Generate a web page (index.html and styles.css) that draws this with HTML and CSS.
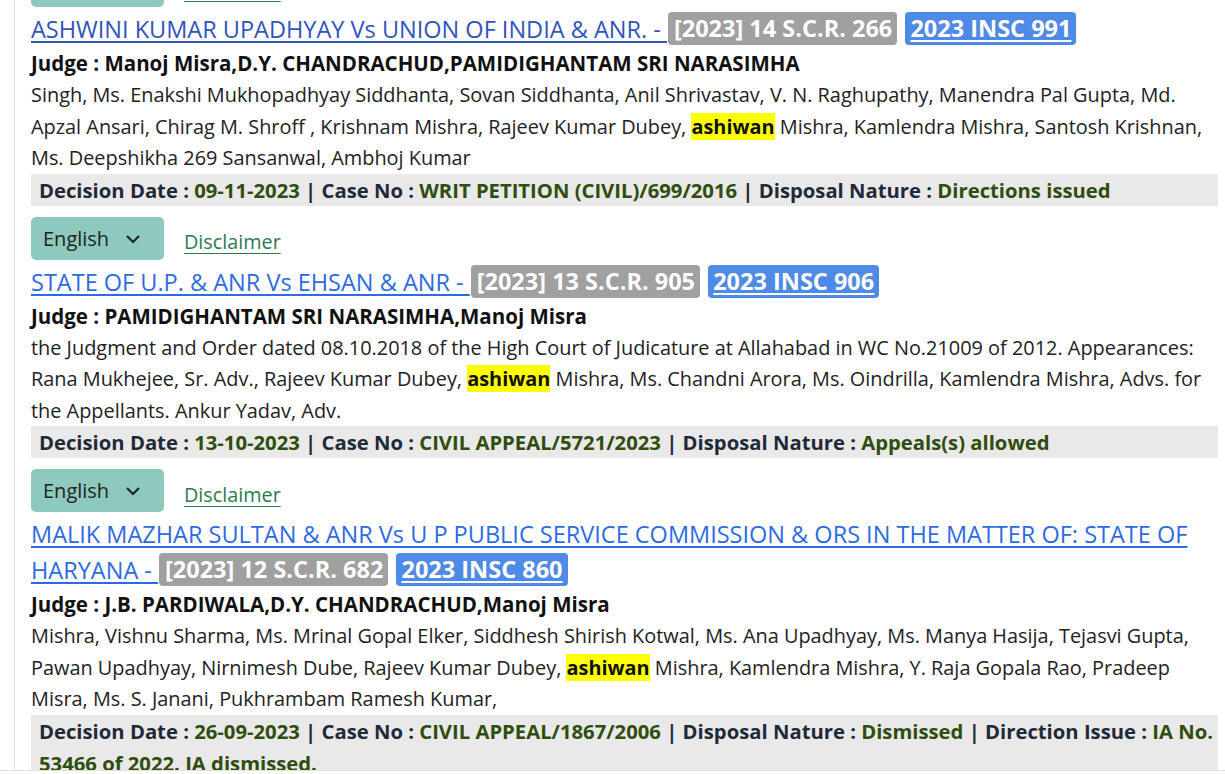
FILE: index.html
```html
<!DOCTYPE html>
<html lang="en">
<head>
<meta charset="utf-8">
<title>Judgments</title>
<link rel="stylesheet" href="styles.css">
</head>
<body>
<div class="page">
  <div class="list">
    <div class="entry">
      <div class="tools">
        <div class="select">English <svg class="chev" width="16" height="10" viewBox="0 0 16 10"><path d="M2 2l6 6 6-6" fill="none" stroke="#222" stroke-width="2.2"/></svg></div>
        <a class="disc" href="#">Disclaimer</a>
      </div>
      <div class="title"><a class="tlink visited" href="#">ASHWINI KUMAR UPADHYAY Vs UNION OF INDIA &amp; ANR. - </a> <span class="badge grey">[2023] 14 S.C.R. 266</span> <a class="badge blue" href="#">2023 INSC 991</a></div>
      <div class="judge">Judge : Manoj Misra,D.Y. CHANDRACHUD,PAMIDIGHANTAM SRI NARASIMHA</div>
      <div class="text">Singh, Ms. Enakshi Mukhopadhyay Siddhanta, Sovan Siddhanta, Anil Shrivastav, V. N. Raghupathy, Manendra Pal Gupta, Md.<br>Apzal Ansari, Chirag M. Shroff , Krishnam Mishra, Rajeev Kumar Dubey, <mark>ashiwan</mark> Mishra, Kamlendra Mishra, Santosh Krishnan,<br>Ms. Deepshikha 269 Sansanwal, Ambhoj Kumar</div>
      <div class="bar">Decision Date : <span class="v">09-11-2023</span> | Case No : <span class="v">WRIT PETITION (CIVIL)/699/2016</span> | Disposal Nature : <span class="v">Directions issued</span></div>
    </div>
    <div class="entry">
      <div class="tools">
        <div class="select">English <svg class="chev" width="16" height="10" viewBox="0 0 16 10"><path d="M2 2l6 6 6-6" fill="none" stroke="#222" stroke-width="2.2"/></svg></div>
        <a class="disc" href="#">Disclaimer</a>
      </div>
      <div class="title"><a class="tlink" href="#">STATE OF U.P. &amp; ANR Vs EHSAN &amp; ANR - </a> <span class="badge grey">[2023] 13 S.C.R. 905</span> <a class="badge blue" href="#">2023 INSC 906</a></div>
      <div class="judge">Judge : PAMIDIGHANTAM SRI NARASIMHA,Manoj Misra</div>
      <div class="text">the Judgment and Order dated 08.10.2018 of the High Court of Judicature at Allahabad in WC No.21009 of 2012. Appearances:<br>Rana Mukhejee, Sr. Adv., Rajeev Kumar Dubey, <mark>ashiwan</mark> Mishra, Ms. Chandni Arora, Ms. Oindrilla, Kamlendra Mishra, Advs. for<br>the Appellants. Ankur Yadav, Adv.</div>
      <div class="bar">Decision Date : <span class="v">13-10-2023</span> | Case No : <span class="v">CIVIL APPEAL/5721/2023</span> | Disposal Nature : <span class="v">Appeals(s) allowed</span></div>
    </div>
    <div class="entry">
      <div class="tools">
        <div class="select">English <svg class="chev" width="16" height="10" viewBox="0 0 16 10"><path d="M2 2l6 6 6-6" fill="none" stroke="#222" stroke-width="2.2"/></svg></div>
        <a class="disc" href="#">Disclaimer</a>
      </div>
      <div class="title"><a class="tlink" href="#">MALIK MAZHAR SULTAN &amp; ANR Vs U P PUBLIC SERVICE COMMISSION &amp; ORS IN THE MATTER OF: STATE OF<br>HARYANA - </a> <span class="badge grey">[2023] 12 S.C.R. 682</span> <a class="badge blue" href="#">2023 INSC 860</a></div>
      <div class="judge">Judge : J.B. PARDIWALA,D.Y. CHANDRACHUD,Manoj Misra</div>
      <div class="text">Mishra, Vishnu Sharma, Ms. Mrinal Gopal Elker, Siddhesh Shirish Kotwal, Ms. Ana Upadhyay, Ms. Manya Hasija, Tejasvi Gupta,<br>Pawan Upadhyay, Nirnimesh Dube, Rajeev Kumar Dubey, <mark>ashiwan</mark> Mishra, Kamlendra Mishra, Y. Raja Gopala Rao, Pradeep<br>Misra, Ms. S. Janani, Pukhrambam Ramesh Kumar,</div>
      <div class="bar">Decision Date : <span class="v">26-09-2023</span> | Case No : <span class="v">CIVIL APPEAL/1867/2006</span> | Disposal Nature : <span class="v">Dismissed</span> | Direction Issue : <span class="v">IA No.<br>53466 of 2022. IA dismissed.</span></div>
    </div>
  </div>
</div>
</body>
</html>
```

FILE: styles.css
```css
* { box-sizing: border-box; }
html, body { margin: 0; padding: 0; background: #fff; }
body {
  font-family: "Open Sans", "Noto Sans", sans-serif;
  color: #111;
  font-size: 20px;
}
.page {
  height: 771px;
  overflow: hidden;
  border-bottom: 1px solid #e2e2e2;
}
.list {
  margin-left: 14px;
  margin-right: 7px;
  border-left: 1px solid #e0e0e0;
  padding-left: 16px;
  margin-top: -36px;
  padding-bottom: 200px;
}
.entry { margin-bottom: 11px; }
.tools {
  display: flex;
  align-items: center;
  gap: 20px;
  height: 43px;
}
.select {
  width: 133px;
  height: 43px;
  background: #8dcabd;
  border-radius: 5px;
  display: flex;
  align-items: center;
  padding-left: 12px;
  gap: 16px;
  color: #222;
  font-size: 20px;
}
.chev { display: block; margin-top: 1px; }
.disc {
  color: #2d7a50;
  text-decoration: underline;
  text-underline-offset: 4px;
  margin-top: 7px;
  font-size: 19.8px;
}
.title {
  padding-top: 4px;
  font-size: 23.5px;
  line-height: 36px;
}
.tlink {
  color: #2d6be2;
  text-decoration: underline;
  text-underline-offset: 3px;
}
.tlink.visited { color: #3154bd; }
.badge {
  display: inline-block;
  height: 33px;
  line-height: 33px;
  padding: 0 5px;
  border-radius: 4px;
  color: #fff;
  font-weight: 700;
  font-size: 23.5px;
  vertical-align: top;
  margin-top: 1px;
}
.badge.grey { background: #a0a0a0; margin-left: 1px; padding: 0 5px 0 6px; }
.badge.blue { background: #4f8ae6; text-decoration: underline; text-underline-offset: 3px; margin-left: 2px; }
.judge {
  font-weight: 700;
  font-size: 20.5px;
  line-height: 32px;
  color: #111;
}
.text {
  font-size: 19.9px;
  line-height: 31.5px;
  color: #222;
}
mark {
  background: #ffff00;
  color: #111;
  font-weight: 700;
}
.bar {
  background: #e9e9e9;
  padding: 0 0 0 8px;
  font-size: 20.25px;
  line-height: 32px;
  font-weight: 700;
  color: #1e2a38;
  white-space: nowrap;
}
.bar .v { color: #2f4d0c; }
```
